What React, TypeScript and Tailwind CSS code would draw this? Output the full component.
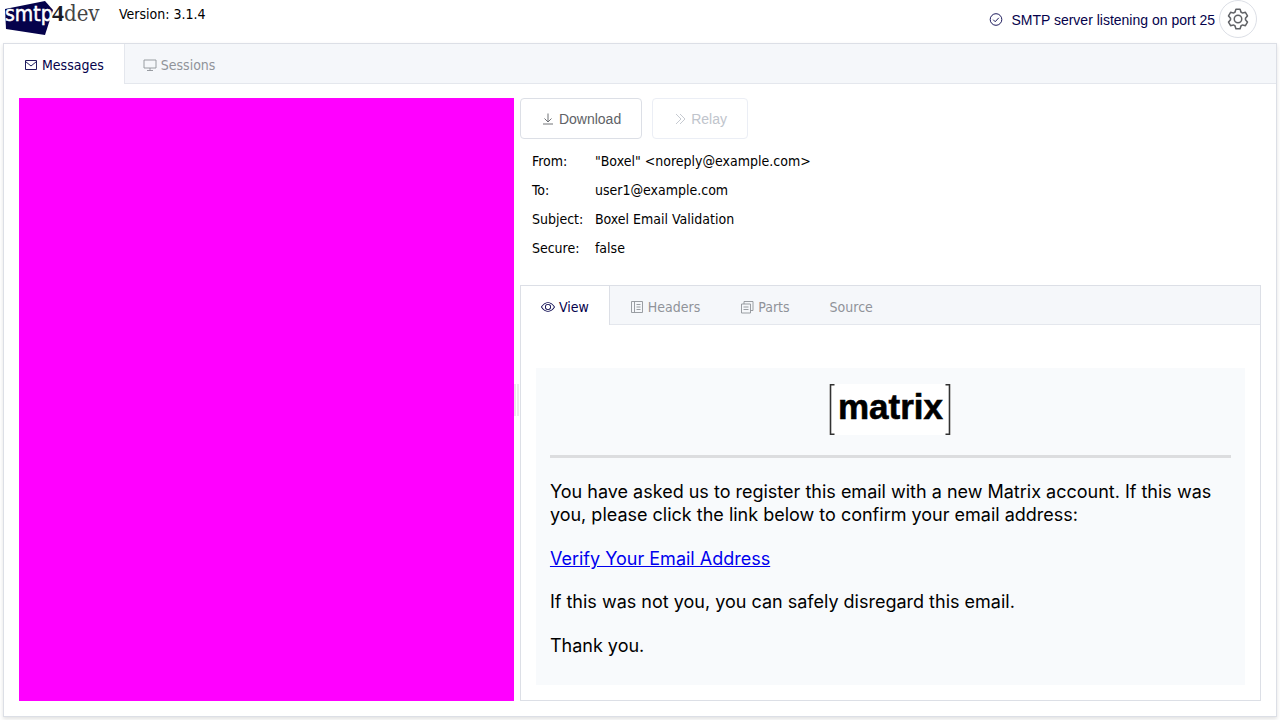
import React from "react";

type IconProps = { d: string; className?: string };
function Icon({ d, className = "size-3.5" }: IconProps) {
  return (
    <svg viewBox="0 0 1024 1024" className={className} fill="currentColor" aria-hidden="true">
      <path d={d} />
    </svg>
  );
}

type LineIconProps = { children: React.ReactNode; className?: string };
function LineIcon({ children, className = "size-3.5" }: LineIconProps) {
  return (
    <svg viewBox="0 0 14 14" className={className} fill="none" stroke="currentColor" strokeWidth="0.900" aria-hidden="true">
      {children}
    </svg>
  );
}

const gear =
  "M600.704 64a32 32 0 0 1 30.464 22.208l35.2 109.376c14.784 7.232 28.928 15.36 42.432 24.512l112.384-24.192a32 32 0 0 1 34.432 15.36L944.32 364.8a32 32 0 0 1-4.032 37.504l-77.12 85.12a357.12 357.12 0 0 1 0 49.024l77.12 85.248a32 32 0 0 1 4.032 37.504l-88.704 153.6a32 32 0 0 1-34.432 15.296L708.8 803.904c-13.44 9.088-27.648 17.28-42.368 24.512l-35.264 109.376A32 32 0 0 1 600.704 960H423.296a32 32 0 0 1-30.464-22.208L357.696 828.48a351.616 351.616 0 0 1-42.56-24.64l-112.32 24.256a32 32 0 0 1-34.432-15.36L79.68 659.2a32 32 0 0 1 4.032-37.504l77.12-85.248a357.12 357.12 0 0 1 0-48.896l-77.12-85.248A32 32 0 0 1 79.68 364.8l88.704-153.6a32 32 0 0 1 34.432-15.296l112.32 24.256c13.568-9.152 27.776-17.408 42.56-24.64l35.2-109.312A32 32 0 0 1 423.232 64H600.64zm-23.424 64H446.72l-36.352 113.088-24.512 11.968a294.113 294.113 0 0 0-34.816 20.096l-22.656 15.36-116.224-25.088-65.28 113.152 79.68 88.192-1.92 27.136a293.12 293.12 0 0 0 0 40.192l1.92 27.136-79.808 88.192 65.344 113.152 116.224-25.024 22.656 15.296a294.113 294.113 0 0 0 34.816 20.096l24.512 11.968L446.72 896h130.688l36.48-113.152 24.448-11.904a288.282 288.282 0 0 0 34.752-20.096l22.592-15.296 116.288 25.024 65.28-113.152-79.744-88.192 1.92-27.136a293.12 293.12 0 0 0 0-40.256l-1.92-27.136 79.808-88.128-65.344-113.152-116.288 24.96-22.592-15.232a287.616 287.616 0 0 0-34.752-20.096l-24.448-11.904L577.344 128zM512 320a192 192 0 1 1 0 384 192 192 0 0 1 0-384zm0 64a128 128 0 1 0 0 256 128 128 0 0 0 0-256z";
const eye =
  "M512 160c320 0 512 352 512 352S832 864 512 864 0 512 0 512s192-352 512-352zm0 64c-225.28 0-384.128 208.064-436.8 288 52.608 79.872 211.456 288 436.8 288 225.28 0 384.128-208.064 436.8-288-52.608-79.872-211.456-288-436.8-288zm0 64a224 224 0 1 1 0 448 224 224 0 0 1 0-448zm0 64a160.192 160.192 0 0 0-160 160c0 88.192 71.744 160 160 160s160-71.808 160-160-71.744-160-160-160z";

function Logo() {
  return (
    <svg viewBox="0 0 96 36" className="h-9 w-24" role="img" aria-label="smtp4dev">
      <path d="M0 9 40 1 48 10 40 35 1 29Z" fill="#05024b" />
      <text x="0" y="21" fontFamily="'DejaVu Sans Condensed','DejaVu Sans',sans-serif" fontSize="21" fill="#fff" stroke="#fff" strokeWidth="0.500">smtp</text>
      <text x="47" y="21" fontFamily="'Liberation Serif',serif" fontSize="24" fontWeight="700" fill="#1b1b24">4</text>
      <text x="59" y="21" fontFamily="'DejaVu Serif Condensed','DejaVu Serif',serif" fontSize="22" fill="#444">dev</text>
    </svg>
  );
}

function MatrixLogo() {
  return (
    <svg viewBox="0 0 122 52" className="h-13 w-[122px]" role="img" aria-label="matrix">
      <path d="M0 0H122V51H0Z" fill="#fff" />
      <path d="M5.500 .8H1.500V50.200H5.500M116.500 .8H120.500V50.200H116.500" fill="none" stroke="#333" strokeWidth="1.600" />
      <text x="9" y="35" fontFamily="'Liberation Sans',sans-serif" fontSize="35" fontWeight="700" fill="#000" stroke="#000" strokeWidth="0.600">matrix</text>
    </svg>
  );
}

const details = [
  ["From:", '"Boxel" <noreply@example.com>'],
  ["To:", "user1@example.com"],
  ["Subject:", "Boxel Email Validation"],
  ["Secure:", "false"],
];

export default function App() {
  return (
    <div className="flex h-screen min-h-[600px] flex-col overflow-hidden bg-white font-['DejaVu_Sans_Condensed','DejaVu_Sans',sans-serif] text-sm text-black">
      <header className="flex h-[43px] shrink-0 items-start pr-[23px] pl-[5px]">
        <Logo />
        <span className="ml-[18px] pt-1">Version: 3.1.4</span>
        <div className="ml-auto flex items-center font-['Liberation_Sans',sans-serif] text-[#05024b]">
          <LineIcon className="mr-2 size-3.5">
            <circle cx="7" cy="7.500" r="5.800" />
            <path d="m4.200 7.700 2 2 3.600-3.900" />
          </LineIcon>
          <span className="pt-0.5">SMTP server listening on port 25</span>
          <button type="button" aria-label="Settings" className="ml-1 flex size-[38px] items-center justify-center rounded-full border border-[#dcdfe6] text-[#606266]">
            <Icon d={gear} className="size-6" />
          </button>
        </div>
      </header>

      <main className="mx-[3px] mb-[3px] flex min-h-0 flex-1 flex-col border border-[#dcdfe6] shadow-[0_2px_4px_rgba(0,0,0,0.12)]">
        <nav role="tablist" className="flex h-10 shrink-0 border-b border-[#e4e7ed] bg-[#f5f7fa] text-[#909399]">
          <button type="button" role="tab" aria-selected="true" className="-mb-px flex items-center gap-1 border-r border-[#e4e7ed] bg-white px-5 pt-0.5 text-[#05024b]">
            <LineIcon>
              <path d="M1.500 2.500h11v9h-11zM1.500 3.500 7 8l5.500-4.500" />
            </LineIcon>
            Messages
          </button>
          <button type="button" role="tab" aria-selected="false" className="flex items-center gap-1 px-[18px] pt-[3px]">
            <LineIcon>
              <path d="M1 2h12v8H1zM7 10v2.500M4 12.500h6" />
            </LineIcon>
            Sessions
          </button>
        </nav>

        <div className="flex min-h-0 flex-1 px-[15px] pt-3.5 pb-[15px]">
          <section aria-label="Message list" className="w-[39.850%] shrink-0 bg-[#ff00ff]" />
          <div className="flex w-[6px] shrink-0 items-center justify-center gap-px">
            <span className="h-8 w-0.5 bg-[#ebebeb]" />
            <span className="h-8 w-0.5 bg-[#ebebeb]" />
          </div>
          <section className="flex min-w-0 flex-1 flex-col">
            <div className="flex gap-2.5 font-['Liberation_Sans',sans-serif]">
              <button type="button" className="flex h-[41px] items-center gap-1 rounded border border-[#dcdfe6] px-5 text-[#606266]">
                <LineIcon>
                  <path d="M7 1.500v8M3.500 6.500 7 10l3.500-3.500M2 12h10" />
                </LineIcon>
                Download
              </button>
              <button type="button" disabled className="flex h-[41px] items-center gap-1 rounded border border-[#ebeef5] px-5 text-[#c0c4cc]">
                <LineIcon>
                  <path d="m3 2 5 5-5 5M7 2l5 5-5 5" />
                </LineIcon>
                Relay
              </button>
            </div>

            <dl className="mt-2 grid grid-cols-[63px_1fr] pl-3">
              {details.map(([k, v]) => (
                <React.Fragment key={k}>
                  <dt className="h-[29px] leading-7">{k}</dt>
                  <dd className="h-[29px] leading-7">{v}</dd>
                </React.Fragment>
              ))}
            </dl>

            <div className="mt-[22px] flex min-h-0 flex-1 flex-col border border-[#dcdfe6]">
              <div role="tablist" className="flex h-[39px] shrink-0 border-b border-[#e4e7ed] bg-[#f5f7fa] text-[#909399]">
                <button type="button" role="tab" aria-selected="true" className="-mb-px flex items-center gap-1 border-r border-[#dcdfe6] bg-white px-5 pt-[3px] text-[#05024b]">
                  <Icon d={eye} />
                  View
                </button>
                <button type="button" role="tab" aria-selected="false" className="flex items-center gap-1 px-5 pt-1">
                  <LineIcon>
                    <path d="M1.500 1.500h11v11h-11zM4.500 1.500v11M6.500 4.500h4M6.500 7h4M6.500 9.500h4" />
                  </LineIcon>
                  Headers
                </button>
                <button type="button" role="tab" aria-selected="false" className="flex items-center gap-1 px-5 pt-1">
                  <LineIcon>
                    <path d="M1.500 4h9v9h-9zM4 4V1.500h9v9h-2.500M3.500 7h5M3.500 9.500h5" />
                  </LineIcon>
                  Parts
                </button>
                <button type="button" role="tab" aria-selected="false" className="px-5 pt-1">
                  Source
                </button>
              </div>
              <div className="min-h-0 flex-1 px-[15px] pt-[43px] pb-[15px]">
                <article className="h-full overflow-hidden bg-[#f8fafc] px-3.5 pt-4 font-[Inter,sans-serif] text-lg leading-[23px]">
                  <div className="flex justify-center">
                    <MatrixLogo />
                  </div>
                  <hr className="mt-[19px] border-t-[3px] border-[#dcdddf]" />
                  <p className="mt-[22px]">
                    You have asked us to register this email with a new Matrix account. If this was you, please click the link below to confirm your email address:
                  </p>
                  <p className="mt-[21px]">
                    <a href="#verify" className="text-[#0000ee] underline">
                      Verify Your Email Address
                    </a>
                  </p>
                  <p className="mt-5">If this was not you, you can safely disregard this email.</p>
                  <p className="mt-[21px]">Thank you.</p>
                </article>
              </div>
            </div>
          </section>
        </div>
      </main>
    </div>
  );
}
